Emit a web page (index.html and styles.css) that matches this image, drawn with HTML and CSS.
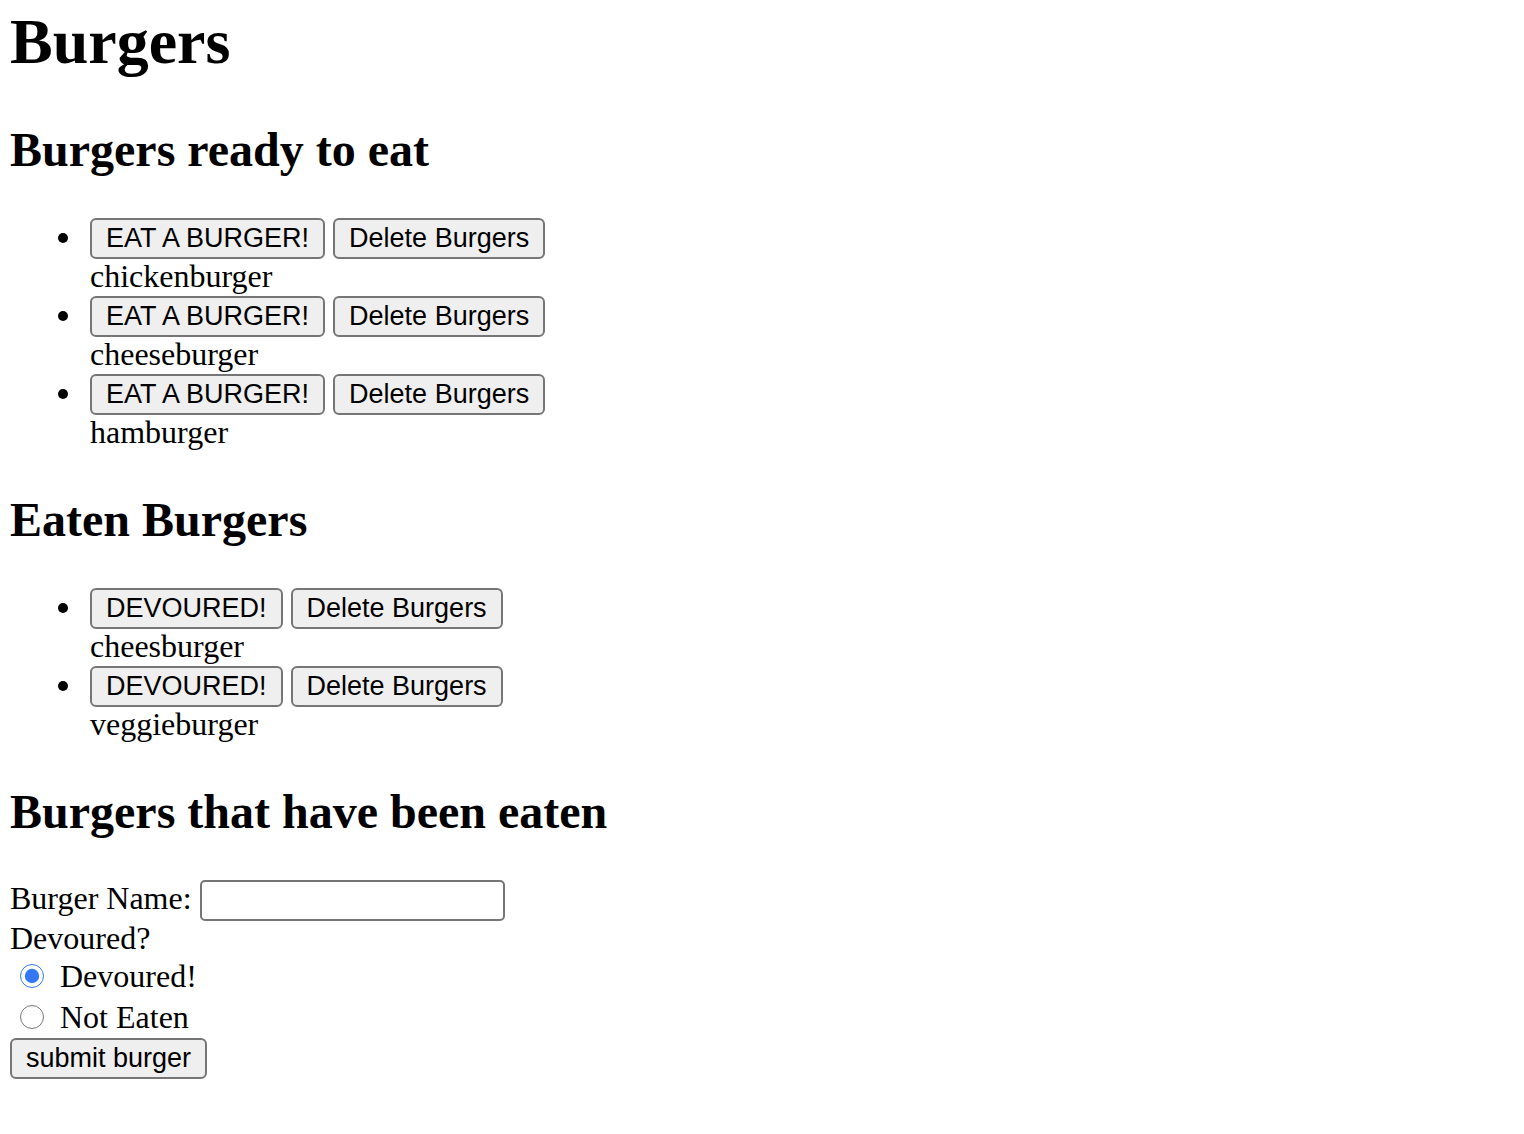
FILE: index.html
```html
<!DOCTYPE html>
<html lang="en">
<head>
<meta charset="utf-8">
<title>Burgers</title>
<link rel="stylesheet" href="styles.css">
</head>
<body>
<h1 class="title">Burgers</h1>

<h2 class="section-title">Burgers ready to eat</h2>
<ul class="burger-list">
  <li class="burger-item"><button class="btn">EAT A BURGER!</button> <button class="btn">Delete Burgers</button><div class="burger-name">chickenburger</div></li>
  <li class="burger-item"><button class="btn">EAT A BURGER!</button> <button class="btn">Delete Burgers</button><div class="burger-name">cheeseburger</div></li>
  <li class="burger-item"><button class="btn">EAT A BURGER!</button> <button class="btn">Delete Burgers</button><div class="burger-name">hamburger</div></li>
</ul>

<h2 class="section-title">Eaten Burgers</h2>
<ul class="burger-list">
  <li class="burger-item"><button class="btn">DEVOURED!</button> <button class="btn">Delete Burgers</button><div class="burger-name">cheesburger</div></li>
  <li class="burger-item"><button class="btn">DEVOURED!</button> <button class="btn">Delete Burgers</button><div class="burger-name">veggieburger</div></li>
</ul>

<h2 class="section-title">Burgers that have been eaten</h2>
<form class="burger-form">
  <div class="form-row"><label for="burger-name">Burger Name:</label> <input id="burger-name" class="text-input" type="text"></div>
  <div class="form-label">Devoured?</div>
  <label class="radio-row"><input class="radio" type="radio" name="devoured" checked>Devoured!</label>
  <label class="radio-row"><input class="radio" type="radio" name="devoured">Not Eaten</label>
  <button class="btn" type="submit">submit burger</button>
</form>
</body>
</html>
```

FILE: styles.css
```css
html {
  background: #fff;
}

body {
  margin: 0 10px;
  font-family: "Liberation Serif", "Times New Roman", serif;
  font-size: 32px;
  color: #000;
}

.title {
  font-size: 64px;
  font-weight: bold;
  margin: 5px 0 43px;
}

.section-title {
  font-size: 48px;
  font-weight: bold;
  margin: 40px 0 41px;
}

.burger-list {
  margin: 32px 0;
  padding-left: 80px;
  list-style: none;
}

.burger-item {
  position: relative;
  line-height: 34px;
}

.burger-item::before {
  content: "";
  position: absolute;
  left: -32px;
  top: 15px;
  width: 10px;
  height: 10px;
  border-radius: 50%;
  background: #000;
}

.burger-name {
  line-height: 34px;
  padding-bottom: 3px;
}

.btn {
  font-family: "Liberation Sans", Arial, sans-serif;
  font-size: 27px;
  line-height: 29px;
  padding: 4px 14px;
  margin: 0;
  border: 2px solid #767676;
  border-radius: 6px;
  background: #efefef;
  color: #000;
}

.burger-form {
  margin: 0;
}

.form-row {
  line-height: 34px;
}

.text-input {
  box-sizing: border-box;
  width: 305px;
  height: 41px;
  margin: 0;
  padding: 2px 4px;
  font-family: "Liberation Sans", Arial, sans-serif;
  font-size: 26px;
  border: 2px solid #767676;
  border-radius: 5px;
  background: #fff;
}

.form-label {
  line-height: 35px;
}

.radio-row {
  display: flex;
  align-items: center;
  height: 41px;
  line-height: 35px;
}

.radio {
  width: 24px;
  height: 24px;
  margin: 0 16px 2px 10px;
  accent-color: #3478f6;
}
```
